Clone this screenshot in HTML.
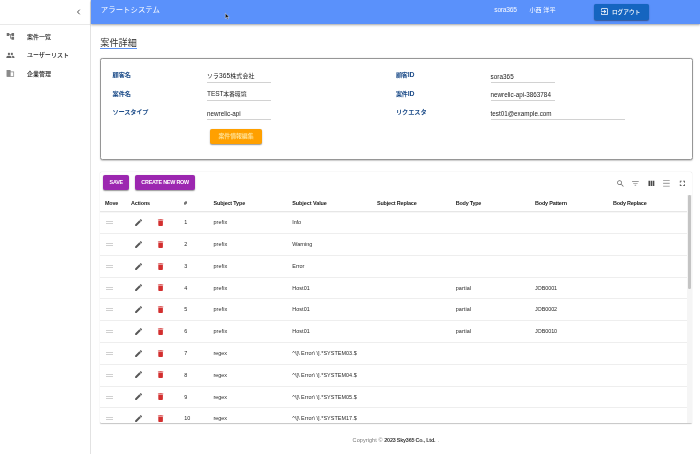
<!DOCTYPE html>
<html lang="ja"><head><meta charset="utf-8"><title>アラートシステム</title>
<style>
html,body{margin:0;padding:0;background:#fff;}
body{width:700px;height:454px;overflow:hidden;position:relative;font-family:"Liberation Sans", "Noto Sans CJK JP", sans-serif;-webkit-font-smoothing:antialiased;}
.a{position:absolute;}
.t{position:absolute;white-space:pre;line-height:1;}
.hl{position:absolute;height:1px;}
svg{position:absolute;overflow:visible;}
.hdr{left:91px;top:0;width:609px;height:23.7px;background:#5a91fb;box-shadow:0 0.8px 1.6px rgba(0,0,0,.3),0 1.5px 2px rgba(0,0,0,.14);}
.side{left:0;top:0;width:90.5px;height:454px;background:#fff;border-right:0.5px solid #e2e2e2;box-sizing:border-box;}
.sdiv{left:0;top:24.2px;width:90.3px;height:0.6px;background:#e9e9e9;}
.btn{border-radius:2px;box-shadow:0 1px 1.6px rgba(0,0,0,.28),0 0.6px 1px rgba(0,0,0,.18);}
.card{left:100px;top:58px;width:592.5px;height:102.3px;box-sizing:border-box;border:0.85px solid #969696;border-radius:2.4px;box-shadow:0 0.8px 1.3px rgba(0,0,0,.22);background:#fff;}
.paper{left:99.9px;top:172.0px;width:592.6px;height:250.8px;background:#fff;border-radius:1.5px;box-shadow:0 0.9px 0.9px rgba(0,0,0,.17),0 0.4px 1.5px rgba(0,0,0,.08);}
.ul{position:absolute;height:0.7px;background:#d2d2d2;}
.rl{position:absolute;left:100px;width:587.3px;height:0.7px;background:#eeeeee;}
.t{filter:blur(0.56px);}
.root{position:absolute;left:0;top:0;width:1400px;height:908px;transform:scale(0.5);transform-origin:0 0;}
</style></head><body>
<div class="a side"></div>
<div class="a sdiv"></div>
<div class="a hdr"></div>
<!-- cursor -->
<svg style="left:224.9px;top:13.1px;z-index:5;" width="4.6" height="6.6" viewBox="0 0 12.5 19"><path d="M0.6 0.6V15.800l3.700-3.400 2.600 6 2.400-1-2.600-5.900h5z" fill="#111" stroke="#f4f4f4" stroke-width="1.3" stroke-linejoin="round"/></svg>
<!-- chevron -->
<svg style="left:75.7px;top:8.6px;" width="5" height="6" viewBox="0 0 5 6"><path d="M3.7 0.7 L1.5 3 L3.7 5.3" fill="none" stroke="#444" stroke-width="0.95"/></svg>
<!-- sidebar icons -->
<svg style="left:5.6px;top:32.4px;" width="8.8" height="8.8" viewBox="0 0 24 24"><path d="M22 11V3h-7v3H9V3H2v8h7V8h2v10h4v3h7v-8h-7v3h-2V8h2v3z" fill="#6f6f6f"/></svg>
<svg style="left:5.6px;top:50.6px;" width="8.8" height="8.8" viewBox="0 0 24 24"><path d="M16 11c1.660 0 2.990-1.340 2.990-3S17.660 5 16 5c-1.660 0-3 1.340-3 3s1.340 3 3 3zm-8 0c1.660 0 2.990-1.340 2.990-3S9.660 5 8 5C6.340 5 5 6.340 5 8s1.340 3 3 3zm0 2c-2.330 0-7 1.170-7 3.500V19h14v-2.500c0-2.330-4.670-3.500-7-3.500zm8 0c-.29 0-.62.020-.97.050 1.160.84 1.970 1.970 1.970 3.450V19h6v-2.500c0-2.330-4.670-3.500-7-3.500z" fill="#666"/></svg>
<svg style="left:5.6px;top:69.0px;" width="8.8" height="8.8" viewBox="0 0 24 24"><path d="M12 7V3H2v18h20V7H12zm8 12h-8V9h8v10z" fill="#8a8a8a"/><path d="M2 3h10v18H2z" fill="#8a8a8a"/></svg>
<!-- logout button -->
<div class="a btn" style="left:593.6px;top:3.5px;width:55.4px;height:16.2px;background:#1565c0;"></div>
<svg style="left:600.0px;top:7.1px;" width="9" height="9" viewBox="0 0 24 24"><path d="M10.09 15.59 11.5 17l5-5-5-5-1.41 1.41L12.670 11H3v2h9.670l-2.580 2.590zM19 3H5c-1.110 0-2 .9-2 2v4h2V5h14v14H5v-4H3v4c0 1.100.89 2 2 2h14c1.100 0 2-.9 2-2V5c0-1.100-.9-2-2-2z" fill="#fff"/></svg>
<!-- title underline -->
<div class="a" style="left:100.2px;top:47.6px;width:36.8px;height:0.9px;background:#5a90f2;"></div>
<!-- card -->
<div class="a card"></div>
<div class="ul" style="left:207px;top:81.6px;width:63.5px;"></div>
<div class="ul" style="left:207px;top:100.2px;width:63.5px;"></div>
<div class="ul" style="left:207px;top:118.9px;width:63.5px;"></div>
<div class="ul" style="left:490.5px;top:81.6px;width:64px;"></div>
<div class="ul" style="left:490.5px;top:100.2px;width:64px;"></div>
<div class="ul" style="left:490.5px;top:118.9px;width:134px;"></div>
<div class="a btn" style="left:209.9px;top:128.5px;width:52.4px;height:15.9px;background:#ffa000;"></div>
<!-- table paper -->
<div class="a paper"></div>
<div class="a btn" style="left:103.2px;top:175.2px;width:25.8px;height:14.7px;background:#9c27b0;"></div>
<div class="a btn" style="left:135.2px;top:175.2px;width:59.7px;height:14.7px;background:#9c27b0;"></div>
<!-- toolbar icons -->
<svg style="left:615.80px;top:178.80px;" width="9.0" height="9.0" viewBox="0 0 24 24"><path d="M15.500 14h-.79l-.28-.27C15.410 12.590 16 11.110 16 9.500 16 5.910 13.090 3 9.500 3S3 5.910 3 9.500 5.910 16 9.500 16c1.610 0 3.090-.59 4.230-1.570l.27.28v.79l5 4.990L20.490 19l-4.990-5zm-6 0C7.010 14 5 11.990 5 9.500S7.010 5 9.500 5 14 7.010 14 9.500 11.990 14 9.500 14z" fill="#6a6a6a"/></svg>
<svg style="left:631.10px;top:178.50px;" width="8.8" height="8.8" viewBox="0 0 24 24"><path d="M10 18.300h4v-2.600h-4zM3 5.700v2.600h18V5.700zm3 7.600h12v-2.600H6z" fill="#999999"/></svg>
<svg style="left:646.60px;top:178.50px;" width="8.8" height="8.8" viewBox="0 0 24 24"><path d="M4 5h4.300v14H4zm5.850 0h4.300v14h-4.300zm5.850 0H20v14h-4.300z" fill="#4a4a4a"/></svg>
<svg style="left:661.90px;top:178.50px;" width="8.8" height="8.8" viewBox="0 0 24 24"><path d="M3 2.600h18v2.900H3zm0 15.900h18v2.900H3zm0-7.950h18v2.900H3z" fill="#aaaaaa"/></svg>
<svg style="left:677.60px;top:178.70px;" width="8.8" height="8.8" viewBox="0 0 24 24"><path d="M7 14H5v5h5v-2H7v-3zm-2-4h2V7h3V5H5v5zm12 7h-3v2h5v-5h-2v3zM14 5v2h3v3h2V5h-5z" fill="#4a4a4a"/></svg>
<div class="a" style="left:0;top:0;width:700px;height:422.8px;overflow:hidden;">
<div class="a" style="left:100px;top:210.6px;width:587.3px;height:0.8px;background:#e6e6e6;box-shadow:0 0.7px 0.9px rgba(0,0,0,.05);"></div>
<div class="rl" style="top:233.04px;"></div>
<div class="a" style="left:106px;top:221px;width:7px;height:1px;background:#d0d0d0;box-shadow:0 2px 0 #d0d0d0;"></div>
<svg style="left:134.15px;top:218.00px;" width="9.2" height="9.2" viewBox="0 0 24 24"><path d="M3 17.250V21h3.750L17.810 9.940l-3.750-3.750L3 17.250zM20.710 7.040c.39-.39.39-1.020 0-1.410l-2.340-2.340a.9959.9959 0 0 0-1.410 0l-1.830 1.830 3.750 3.750 1.830-1.830z" fill="#585858"/></svg>
<svg style="left:155.80px;top:218.00px;" width="9.2" height="9.2" viewBox="0 0 24 24"><path d="M6 19c0 1.100.9 2 2 2h8c1.100 0 2-.9 2-2V7H6v12zM19 4h-3.500l-1-1h-5l-1 1H5v2h14V4z" fill="#d32f2f"/></svg>
<div class="rl" style="top:254.82px;"></div>
<div class="a" style="left:106px;top:243px;width:7px;height:1px;background:#d0d0d0;box-shadow:0 2px 0 #d0d0d0;"></div>
<svg style="left:134.15px;top:239.78px;" width="9.2" height="9.2" viewBox="0 0 24 24"><path d="M3 17.250V21h3.750L17.810 9.940l-3.750-3.750L3 17.250zM20.710 7.040c.39-.39.39-1.020 0-1.410l-2.340-2.340a.9959.9959 0 0 0-1.410 0l-1.830 1.830 3.750 3.750 1.830-1.830z" fill="#585858"/></svg>
<svg style="left:155.80px;top:239.78px;" width="9.2" height="9.2" viewBox="0 0 24 24"><path d="M6 19c0 1.100.9 2 2 2h8c1.100 0 2-.9 2-2V7H6v12zM19 4h-3.500l-1-1h-5l-1 1H5v2h14V4z" fill="#d32f2f"/></svg>
<div class="rl" style="top:276.60px;"></div>
<div class="a" style="left:106px;top:265px;width:7px;height:1px;background:#d0d0d0;box-shadow:0 2px 0 #d0d0d0;"></div>
<svg style="left:134.15px;top:261.56px;" width="9.2" height="9.2" viewBox="0 0 24 24"><path d="M3 17.250V21h3.750L17.810 9.940l-3.750-3.750L3 17.250zM20.710 7.040c.39-.39.39-1.020 0-1.410l-2.340-2.340a.9959.9959 0 0 0-1.410 0l-1.830 1.830 3.750 3.750 1.830-1.830z" fill="#585858"/></svg>
<svg style="left:155.80px;top:261.56px;" width="9.2" height="9.2" viewBox="0 0 24 24"><path d="M6 19c0 1.100.9 2 2 2h8c1.100 0 2-.9 2-2V7H6v12zM19 4h-3.500l-1-1h-5l-1 1H5v2h14V4z" fill="#d32f2f"/></svg>
<div class="rl" style="top:298.38px;"></div>
<div class="a" style="left:106px;top:287px;width:7px;height:1px;background:#d0d0d0;box-shadow:0 2px 0 #d0d0d0;"></div>
<svg style="left:134.15px;top:283.34px;" width="9.2" height="9.2" viewBox="0 0 24 24"><path d="M3 17.250V21h3.750L17.810 9.940l-3.750-3.750L3 17.250zM20.710 7.040c.39-.39.39-1.020 0-1.410l-2.340-2.340a.9959.9959 0 0 0-1.410 0l-1.830 1.830 3.750 3.750 1.830-1.830z" fill="#585858"/></svg>
<svg style="left:155.80px;top:283.34px;" width="9.2" height="9.2" viewBox="0 0 24 24"><path d="M6 19c0 1.100.9 2 2 2h8c1.100 0 2-.9 2-2V7H6v12zM19 4h-3.500l-1-1h-5l-1 1H5v2h14V4z" fill="#d32f2f"/></svg>
<div class="rl" style="top:320.16px;"></div>
<div class="a" style="left:106px;top:308px;width:7px;height:1px;background:#d0d0d0;box-shadow:0 2px 0 #d0d0d0;"></div>
<svg style="left:134.15px;top:305.12px;" width="9.2" height="9.2" viewBox="0 0 24 24"><path d="M3 17.250V21h3.750L17.810 9.940l-3.750-3.750L3 17.250zM20.710 7.040c.39-.39.39-1.020 0-1.410l-2.340-2.340a.9959.9959 0 0 0-1.410 0l-1.830 1.830 3.750 3.750 1.830-1.830z" fill="#585858"/></svg>
<svg style="left:155.80px;top:305.12px;" width="9.2" height="9.2" viewBox="0 0 24 24"><path d="M6 19c0 1.100.9 2 2 2h8c1.100 0 2-.9 2-2V7H6v12zM19 4h-3.500l-1-1h-5l-1 1H5v2h14V4z" fill="#d32f2f"/></svg>
<div class="rl" style="top:341.94px;"></div>
<div class="a" style="left:106px;top:330px;width:7px;height:1px;background:#d0d0d0;box-shadow:0 2px 0 #d0d0d0;"></div>
<svg style="left:134.15px;top:326.90px;" width="9.2" height="9.2" viewBox="0 0 24 24"><path d="M3 17.250V21h3.750L17.810 9.940l-3.750-3.750L3 17.250zM20.710 7.040c.39-.39.39-1.020 0-1.410l-2.340-2.340a.9959.9959 0 0 0-1.410 0l-1.830 1.830 3.750 3.750 1.830-1.830z" fill="#585858"/></svg>
<svg style="left:155.80px;top:326.90px;" width="9.2" height="9.2" viewBox="0 0 24 24"><path d="M6 19c0 1.100.9 2 2 2h8c1.100 0 2-.9 2-2V7H6v12zM19 4h-3.500l-1-1h-5l-1 1H5v2h14V4z" fill="#d32f2f"/></svg>
<div class="rl" style="top:363.72px;"></div>
<div class="a" style="left:106px;top:352px;width:7px;height:1px;background:#d0d0d0;box-shadow:0 2px 0 #d0d0d0;"></div>
<svg style="left:134.15px;top:348.68px;" width="9.2" height="9.2" viewBox="0 0 24 24"><path d="M3 17.250V21h3.750L17.810 9.940l-3.750-3.750L3 17.250zM20.710 7.040c.39-.39.39-1.020 0-1.410l-2.340-2.340a.9959.9959 0 0 0-1.410 0l-1.830 1.830 3.750 3.750 1.830-1.830z" fill="#585858"/></svg>
<svg style="left:155.80px;top:348.68px;" width="9.2" height="9.2" viewBox="0 0 24 24"><path d="M6 19c0 1.100.9 2 2 2h8c1.100 0 2-.9 2-2V7H6v12zM19 4h-3.500l-1-1h-5l-1 1H5v2h14V4z" fill="#d32f2f"/></svg>
<div class="rl" style="top:385.50px;"></div>
<div class="a" style="left:106px;top:374px;width:7px;height:1px;background:#d0d0d0;box-shadow:0 2px 0 #d0d0d0;"></div>
<svg style="left:134.15px;top:370.46px;" width="9.2" height="9.2" viewBox="0 0 24 24"><path d="M3 17.250V21h3.750L17.810 9.940l-3.750-3.750L3 17.250zM20.710 7.040c.39-.39.39-1.020 0-1.410l-2.340-2.340a.9959.9959 0 0 0-1.410 0l-1.830 1.830 3.750 3.750 1.830-1.830z" fill="#585858"/></svg>
<svg style="left:155.80px;top:370.46px;" width="9.2" height="9.2" viewBox="0 0 24 24"><path d="M6 19c0 1.100.9 2 2 2h8c1.100 0 2-.9 2-2V7H6v12zM19 4h-3.500l-1-1h-5l-1 1H5v2h14V4z" fill="#d32f2f"/></svg>
<div class="rl" style="top:407.28px;"></div>
<div class="a" style="left:106px;top:396px;width:7px;height:1px;background:#d0d0d0;box-shadow:0 2px 0 #d0d0d0;"></div>
<svg style="left:134.15px;top:392.24px;" width="9.2" height="9.2" viewBox="0 0 24 24"><path d="M3 17.250V21h3.750L17.810 9.940l-3.750-3.750L3 17.250zM20.710 7.040c.39-.39.39-1.020 0-1.410l-2.340-2.340a.9959.9959 0 0 0-1.410 0l-1.830 1.830 3.750 3.750 1.830-1.830z" fill="#585858"/></svg>
<svg style="left:155.80px;top:392.24px;" width="9.2" height="9.2" viewBox="0 0 24 24"><path d="M6 19c0 1.100.9 2 2 2h8c1.100 0 2-.9 2-2V7H6v12zM19 4h-3.500l-1-1h-5l-1 1H5v2h14V4z" fill="#d32f2f"/></svg>
<div class="a" style="left:106px;top:417px;width:7px;height:1px;background:#d0d0d0;box-shadow:0 2px 0 #d0d0d0;"></div>
<svg style="left:134.15px;top:414.02px;" width="9.2" height="9.2" viewBox="0 0 24 24"><path d="M3 17.250V21h3.750L17.810 9.940l-3.750-3.750L3 17.250zM20.710 7.040c.39-.39.39-1.020 0-1.410l-2.340-2.340a.9959.9959 0 0 0-1.410 0l-1.830 1.830 3.750 3.750 1.830-1.830z" fill="#585858"/></svg>
<svg style="left:155.80px;top:414.02px;" width="9.2" height="9.2" viewBox="0 0 24 24"><path d="M6 19c0 1.100.9 2 2 2h8c1.100 0 2-.9 2-2V7H6v12zM19 4h-3.500l-1-1h-5l-1 1H5v2h14V4z" fill="#d32f2f"/></svg>
</div>
<!-- scrollbar -->
<div class="a" style="left:687.3px;top:194.6px;width:4.4px;height:228.2px;background:#f5f5f5;"></div>
<div class="a" style="left:687.8px;top:194.9px;width:3.3px;height:94.4px;background:#c4c4c4;border-radius:1.2px;"></div>
<div class="root">
<span class="t" id="t0" style="left:201.60px;top:10.60px;font-size:14.80px;font-weight:400;color:#ffffff;letter-spacing:0.058px;">アラートシステム</span>
<span class="t" id="t1" style="left:988.60px;top:12.50px;font-size:13.40px;font-weight:400;color:#f4f7ff;letter-spacing:-0.515px;">sora365</span>
<span class="t" id="t2" style="left:1059.00px;top:12.90px;font-size:12.20px;font-weight:400;color:#ffffff;letter-spacing:-0.028px;">小西 洋平</span>
<span class="t" id="t3" style="left:1223.80px;top:17.70px;font-size:11.40px;font-weight:500;color:#ffffff;letter-spacing:0.046px;">ログアウト</span>
<span class="t" id="t4" style="left:53.80px;top:68.40px;font-size:12.00px;font-weight:500;color:#222;letter-spacing:-0.004px;">案件一覧</span>
<span class="t" id="t5" style="left:53.80px;top:104.20px;font-size:12.00px;font-weight:500;color:#222;letter-spacing:0.062px;">ユーザーリスト</span>
<span class="t" id="t6" style="left:53.80px;top:142.00px;font-size:12.00px;font-weight:500;color:#222;letter-spacing:-0.004px;">企業管理</span>
<span class="t" id="t7" style="left:200.40px;top:75.90px;font-size:18.20px;font-weight:400;color:#333;letter-spacing:0.209px;">案件詳細</span>
<span class="t" id="t8" style="left:225.20px;top:143.20px;font-size:12.40px;font-weight:700;color:#1b4b88;letter-spacing:-0.257px;">顧客名</span>
<span class="t" id="t9" style="left:225.20px;top:181.40px;font-size:12.40px;font-weight:700;color:#1b4b88;letter-spacing:-0.257px;">案件名</span>
<span class="t" id="t10" style="left:225.20px;top:217.80px;font-size:12.40px;font-weight:700;color:#1b4b88;letter-spacing:-0.389px;">ソースタイプ</span>
<span class="t" id="t11" style="left:791.80px;top:144.30px;font-size:12.20px;font-weight:700;color:#1b4b88;letter-spacing:-0.347px;">顧客<span style="font-size:13.80px;line-height:0">ID</span></span>
<span class="t" id="t12" style="left:791.80px;top:181.70px;font-size:12.20px;font-weight:700;color:#1b4b88;letter-spacing:-0.347px;">案件<span style="font-size:13.80px;line-height:0">ID</span></span>
<span class="t" id="t13" style="left:791.80px;top:217.80px;font-size:12.40px;font-weight:700;color:#1b4b88;letter-spacing:-0.151px;">リクエスタ</span>
<span class="t" id="t14" style="left:414.00px;top:145.70px;font-size:11.80px;font-weight:400;color:#222;letter-spacing:0.219px;">ソラ<span style="font-size:13.20px;line-height:0">365</span>株式会社</span>
<span class="t" id="t15" style="left:414.00px;top:182.70px;font-size:11.80px;font-weight:400;color:#222;letter-spacing:-0.263px;"><span style="font-size:13.20px;line-height:0">TEST</span>本番環境</span>
<span class="t" id="t16" style="left:414.00px;top:220.90px;font-size:12.60px;font-weight:400;color:#222;letter-spacing:0.016px;">newrelic-api</span>
<span class="t" id="t17" style="left:981.00px;top:146.50px;font-size:12.60px;font-weight:400;color:#222;letter-spacing:0.126px;">sora365</span>
<span class="t" id="t18" style="left:981.00px;top:183.70px;font-size:12.60px;font-weight:400;color:#222;letter-spacing:0.019px;">newrelic-api-3863784</span>
<span class="t" id="t19" style="left:981.00px;top:220.90px;font-size:12.60px;font-weight:400;color:#222;letter-spacing:0.012px;">test01@example.com</span>
<span class="t" id="t20" style="left:436.80px;top:266.90px;font-size:11.80px;font-weight:500;color:#ffe6a0;letter-spacing:-0.066px;">案件情報編集</span>
<span class="t" id="t21" style="left:219.20px;top:359.40px;font-size:10.80px;font-weight:700;color:#ffffff;letter-spacing:-0.552px;">SAVE</span>
<span class="t" id="t22" style="left:282.60px;top:359.40px;font-size:10.80px;font-weight:700;color:#ffffff;letter-spacing:-0.412px;">CREATE NEW ROW</span>
<span class="t" id="t23" style="left:210.00px;top:400.95px;font-size:10.90px;font-weight:700;color:#222;letter-spacing:-0.411px;">Move</span>
<span class="t" id="t24" style="left:262.00px;top:400.95px;font-size:10.90px;font-weight:700;color:#222;letter-spacing:-0.277px;">Actions</span>
<span class="t" id="t25" style="left:368.00px;top:400.95px;font-size:10.90px;font-weight:700;color:#222;">#</span>
<span class="t" id="t26" style="left:427.00px;top:400.95px;font-size:10.90px;font-weight:700;color:#222;letter-spacing:-0.332px;">Subject Type</span>
<span class="t" id="t27" style="left:584.60px;top:400.95px;font-size:10.90px;font-weight:700;color:#222;letter-spacing:-0.141px;">Subject Value</span>
<span class="t" id="t28" style="left:754.00px;top:400.95px;font-size:10.90px;font-weight:700;color:#222;letter-spacing:-0.343px;">Subject Replace</span>
<span class="t" id="t29" style="left:911.40px;top:400.95px;font-size:10.90px;font-weight:700;color:#222;letter-spacing:-0.431px;">Body Type</span>
<span class="t" id="t30" style="left:1070.00px;top:400.95px;font-size:10.90px;font-weight:700;color:#222;letter-spacing:-0.348px;">Body Pattern</span>
<span class="t" id="t31" style="left:1226.00px;top:400.95px;font-size:10.90px;font-weight:700;color:#222;letter-spacing:-0.419px;">Body Replace</span>
<span class="t" id="t32" style="left:368.60px;top:439.35px;font-size:10.90px;font-weight:400;color:#2a2a2a;">1</span>
<span class="t" id="t33" style="left:427.00px;top:439.35px;font-size:10.90px;font-weight:400;color:#2a2a2a;letter-spacing:0.127px;">prefix</span>
<span class="t" id="t34" style="left:584.60px;top:439.35px;font-size:10.90px;font-weight:400;color:#2a2a2a;letter-spacing:-0.293px;">Info</span>
<span class="t" id="t35" style="left:368.60px;top:482.91px;font-size:10.90px;font-weight:400;color:#2a2a2a;">2</span>
<span class="t" id="t36" style="left:427.00px;top:482.91px;font-size:10.90px;font-weight:400;color:#2a2a2a;letter-spacing:0.127px;">prefix</span>
<span class="t" id="t37" style="left:584.60px;top:482.91px;font-size:10.90px;font-weight:400;color:#2a2a2a;letter-spacing:-0.022px;">Warning</span>
<span class="t" id="t38" style="left:368.60px;top:526.47px;font-size:10.90px;font-weight:400;color:#2a2a2a;">3</span>
<span class="t" id="t39" style="left:427.00px;top:526.47px;font-size:10.90px;font-weight:400;color:#2a2a2a;letter-spacing:0.127px;">prefix</span>
<span class="t" id="t40" style="left:584.60px;top:526.47px;font-size:10.90px;font-weight:400;color:#2a2a2a;letter-spacing:-0.041px;">Error</span>
<span class="t" id="t41" style="left:368.60px;top:570.03px;font-size:10.90px;font-weight:400;color:#2a2a2a;">4</span>
<span class="t" id="t42" style="left:427.00px;top:570.03px;font-size:10.90px;font-weight:400;color:#2a2a2a;letter-spacing:0.127px;">prefix</span>
<span class="t" id="t43" style="left:584.60px;top:570.03px;font-size:10.90px;font-weight:400;color:#2a2a2a;letter-spacing:0.081px;">Host01</span>
<span class="t" id="t44" style="left:911.40px;top:570.03px;font-size:10.90px;font-weight:400;color:#2a2a2a;letter-spacing:0.190px;">partial</span>
<span class="t" id="t45" style="left:1070.00px;top:570.03px;font-size:10.90px;font-weight:400;color:#2a2a2a;letter-spacing:-0.203px;">JOB0001</span>
<span class="t" id="t46" style="left:368.60px;top:611.59px;font-size:10.90px;font-weight:400;color:#2a2a2a;">5</span>
<span class="t" id="t47" style="left:427.00px;top:611.59px;font-size:10.90px;font-weight:400;color:#2a2a2a;letter-spacing:0.127px;">prefix</span>
<span class="t" id="t48" style="left:584.60px;top:611.59px;font-size:10.90px;font-weight:400;color:#2a2a2a;letter-spacing:0.081px;">Host01</span>
<span class="t" id="t49" style="left:911.40px;top:611.59px;font-size:10.90px;font-weight:400;color:#2a2a2a;letter-spacing:0.190px;">partial</span>
<span class="t" id="t50" style="left:1070.00px;top:611.59px;font-size:10.90px;font-weight:400;color:#2a2a2a;letter-spacing:-0.203px;">JOB0002</span>
<span class="t" id="t51" style="left:368.60px;top:657.15px;font-size:10.90px;font-weight:400;color:#2a2a2a;">6</span>
<span class="t" id="t52" style="left:427.00px;top:657.15px;font-size:10.90px;font-weight:400;color:#2a2a2a;letter-spacing:0.127px;">prefix</span>
<span class="t" id="t53" style="left:584.60px;top:657.15px;font-size:10.90px;font-weight:400;color:#2a2a2a;letter-spacing:0.081px;">Host01</span>
<span class="t" id="t54" style="left:911.40px;top:657.15px;font-size:10.90px;font-weight:400;color:#2a2a2a;letter-spacing:0.190px;">partial</span>
<span class="t" id="t55" style="left:1070.00px;top:657.15px;font-size:10.90px;font-weight:400;color:#2a2a2a;letter-spacing:-0.203px;">JOB0010</span>
<span class="t" id="t56" style="left:368.60px;top:700.71px;font-size:10.90px;font-weight:400;color:#2a2a2a;">7</span>
<span class="t" id="t57" style="left:427.00px;top:700.71px;font-size:10.90px;font-weight:400;color:#2a2a2a;letter-spacing:-0.050px;">regex</span>
<span class="t" id="t58" style="left:584.60px;top:700.71px;font-size:10.90px;font-weight:400;color:#2a2a2a;letter-spacing:0.086px;">^\[\ Error\ \].*SYSTEM03.$</span>
<span class="t" id="t59" style="left:368.60px;top:744.27px;font-size:10.90px;font-weight:400;color:#2a2a2a;">8</span>
<span class="t" id="t60" style="left:427.00px;top:744.27px;font-size:10.90px;font-weight:400;color:#2a2a2a;letter-spacing:-0.050px;">regex</span>
<span class="t" id="t61" style="left:584.60px;top:744.27px;font-size:10.90px;font-weight:400;color:#2a2a2a;letter-spacing:0.086px;">^\[\ Error\ \].*SYSTEM04.$</span>
<span class="t" id="t62" style="left:368.60px;top:787.83px;font-size:10.90px;font-weight:400;color:#2a2a2a;">9</span>
<span class="t" id="t63" style="left:427.00px;top:787.83px;font-size:10.90px;font-weight:400;color:#2a2a2a;letter-spacing:-0.050px;">regex</span>
<span class="t" id="t64" style="left:584.60px;top:787.83px;font-size:10.90px;font-weight:400;color:#2a2a2a;letter-spacing:0.086px;">^\[\ Error\ \].*SYSTEM05.$</span>
<span class="t" id="t68" style="left:705.20px;top:874.55px;font-size:10.90px;font-weight:400;color:#777;letter-spacing:0.212px;">Copyright ©</span>
<span class="t" id="t69" style="left:768.60px;top:874.55px;font-size:10.90px;font-weight:700;color:#3a3a3a;letter-spacing:-0.447px;">2023 Sky365 Co., Ltd.</span>
<span class="t" id="t70" style="left:875.20px;top:874.55px;font-size:10.90px;font-weight:400;color:#777;">.</span>
<div class="a" style="left:0;top:0;width:1400.0px;height:845.6px;overflow:hidden;">
<span class="t" id="t65" style="left:368.60px;top:831.39px;font-size:10.90px;font-weight:400;color:#2a2a2a;">10</span>
<span class="t" id="t66" style="left:427.00px;top:831.39px;font-size:10.90px;font-weight:400;color:#2a2a2a;letter-spacing:-0.050px;">regex</span>
<span class="t" id="t67" style="left:584.60px;top:831.39px;font-size:10.90px;font-weight:400;color:#2a2a2a;letter-spacing:0.086px;">^\[\ Error\ \].*SYSTEM17.$</span>
</div>
</div>
</body></html>
